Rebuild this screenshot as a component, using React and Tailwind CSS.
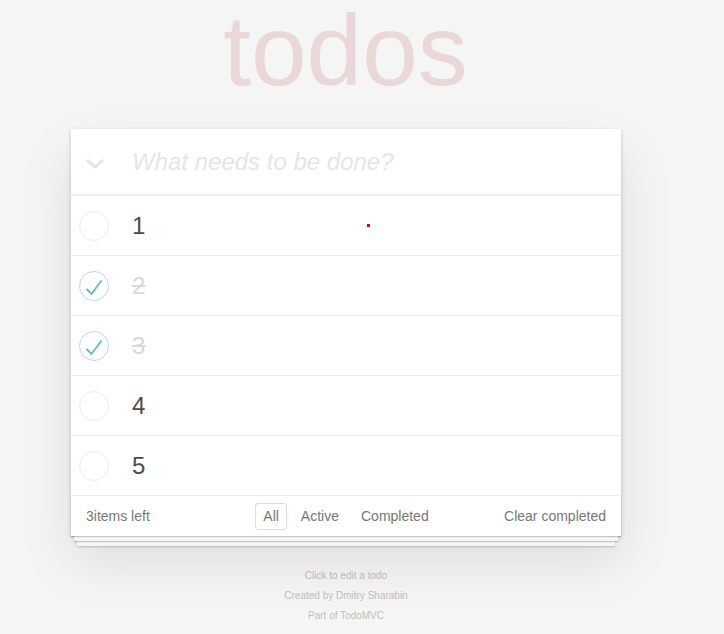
import React from 'react';

const todos = [
  { id: 1, title: '1', done: false },
  { id: 2, title: '2', done: true },
  { id: 3, title: '3', done: true },
  { id: 4, title: '4', done: false },
  { id: 5, title: '5', done: false },
];

const Toggle = ({ done }) => (
  <svg width="30" height="30" viewBox="0 0 30 30" className="shrink-0">
    <circle cx="15" cy="15" r="14.5" fill="none" stroke={done ? '#bddad5' : '#ededed'} strokeWidth="1" />
    {done && <polyline points="7.5,18 12.5,23 22.5,9.5" fill="none" stroke="#5dc2af" strokeWidth="1.8" />}
  </svg>
);

export default function App() {
  return (
    <div className="min-h-screen bg-[#f5f5f5] font-['Liberation_Sans',Arial,sans-serif] text-[14px] text-[#4d4d4d]">
      <div className="w-[692px]">
        <div className="w-[550px] mx-auto">
          <h1 className="text-center text-[100px] leading-[100px] text-[rgba(175,47,47,0.15)] ml-[-1px]">todos</h1>

          <section className="relative mt-[29px] bg-white shadow-[0_2px_4px_0_rgba(0,0,0,0.2),0_25px_50px_0_rgba(0,0,0,0.1)]">
            <header className="flex items-center h-[66px] shadow-[inset_0_-2px_1px_rgba(0,0,0,0.03)]">
              <div className="w-[48px] flex justify-center pt-[4px] mr-[12px]">
                <svg width="22" height="14" viewBox="0 0 22 14">
                  <polyline points="3,3 11,10 19,3" fill="none" stroke="#e6e6e6" strokeWidth="3" />
                </svg>
              </div>
              <input
                className="flex-1 h-full bg-transparent outline-none text-[24px] pl-[1px] placeholder:italic placeholder:text-[#e6e6e6]"
                placeholder="What needs to be done?"
              />
            </header>

            <ul className="border-t border-[#e6e6e6]">
              {todos.map((t) => (
                <li key={t.id} className="relative flex items-center h-[60px] border-b border-[#ededed]">
                  <div className="pl-[8px] pt-[1px]">
                    <Toggle done={t.done} />
                  </div>
                  <span
                    className={`ml-[23px] text-[24px] leading-[29px] ${t.done ? 'text-[#d9d9d9] line-through' : 'text-[#4d4d4d]'}`}
                  >
                    {t.title}
                  </span>
                  {t.id === 1 && <span className="absolute left-[296px] top-[28px] w-[3px] h-[3px] bg-[#ff0000]" />}
                </li>
              ))}
            </ul>

            <footer className="grid grid-cols-[1fr_auto_1fr] items-center h-[40px] px-[15px] text-[#777] shadow-[0_1px_1px_rgba(0,0,0,0.2),0_8px_0_-3px_#f6f6f6,0_9px_1px_-3px_rgba(0,0,0,0.2),0_16px_0_-6px_#f6f6f6,0_17px_2px_-6px_rgba(0,0,0,0.2)]">
              <span>3items left</span>
              <ul className="flex">
                <li className="mx-[3px] px-[7px] py-[2px] border border-[rgba(175,47,47,0.2)] rounded-[3px]">All</li>
                <li className="mx-[3px] px-[7px] py-[2px] border border-transparent">Active</li>
                <li className="mx-[3px] px-[7px] py-[2px] border border-transparent">Completed</li>
              </ul>
              <span className="text-right">Clear completed</span>
            </footer>
          </section>

          <div className="mt-[30px] text-center text-[10px] leading-[20px] text-[#bfbfbf]">
            <p>Click to edit a todo</p>
            <p>Created by Dmitry Sharabin</p>
            <p>Part of TodoMVC</p>
          </div>
        </div>
      </div>
    </div>
  );
}
